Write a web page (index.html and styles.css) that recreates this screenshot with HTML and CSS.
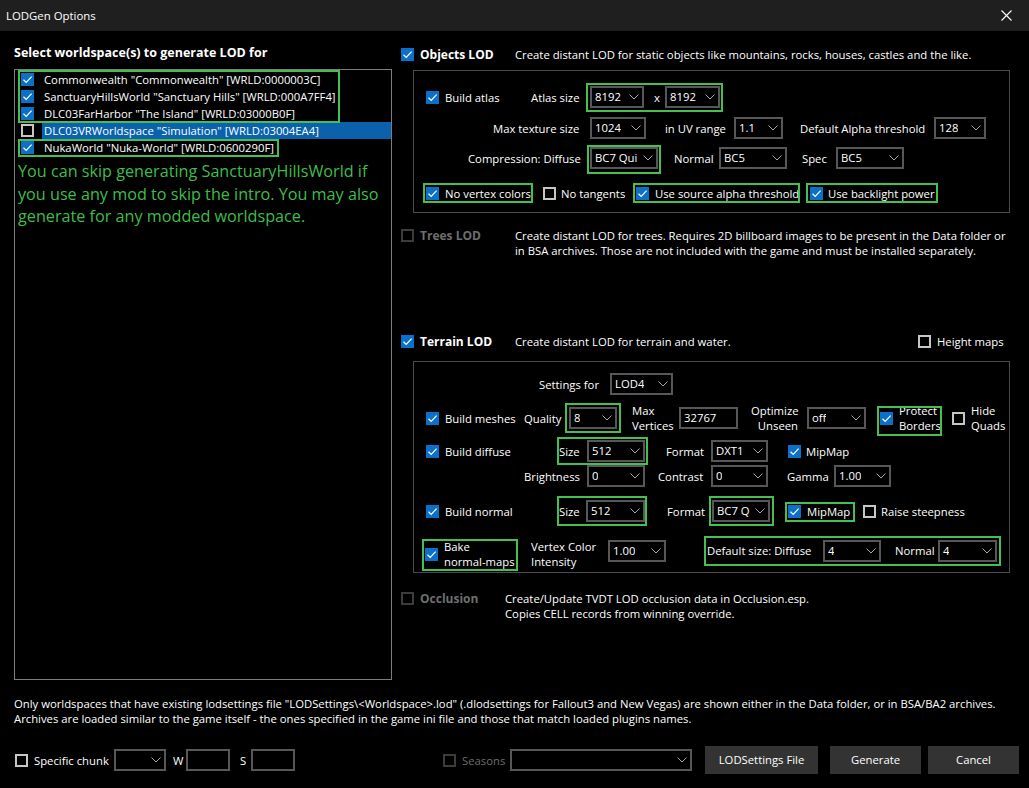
FILE: index.html
```html
<!DOCTYPE html>
<html>
<head>
<meta charset="utf-8">
<title>LODGen Options</title>
<link rel="stylesheet" href="styles.css">
</head>
<body>
<div class="titlebar">
  <span class="title">LODGen Options</span>
  <svg class="close" width="11" height="11" viewBox="0 0 11 11"><path d="M0.5 0.5L10.5 10.5M10.5 0.5L0.5 10.5" stroke="#fff" stroke-width="1.1"/></svg>
</div>

<div class="main">
  <div class="left">
    <h2 class="heading">Select worldspace(s) to generate LOD for</h2>
    <div class="list">
      <div class="item"><span class="cb on"><svg viewBox="0 0 13 13"><polyline points="2.5,6.8 5.2,9.4 10.6,3.6"/></svg></span><span class="name">Commonwealth "Commonwealth" [WRLD:0000003C]</span></div>
      <div class="item"><span class="cb on"><svg viewBox="0 0 13 13"><polyline points="2.5,6.8 5.2,9.4 10.6,3.6"/></svg></span><span class="name">SanctuaryHillsWorld "Sanctuary Hills" [WRLD:000A7FF4]</span></div>
      <div class="item"><span class="cb on"><svg viewBox="0 0 13 13"><polyline points="2.5,6.8 5.2,9.4 10.6,3.6"/></svg></span><span class="name">DLC03FarHarbor "The Island" [WRLD:03000B0F]</span></div>
      <div class="item sel"><span class="cb off"></span><span class="name">DLC03VRWorldspace "Simulation" [WRLD:03004EA4]</span></div>
      <div class="item"><span class="cb on"><svg viewBox="0 0 13 13"><polyline points="2.5,6.8 5.2,9.4 10.6,3.6"/></svg></span><span class="name">NukaWorld "Nuka-World" [WRLD:0600290F]</span></div>
      <p class="note">You can skip generating SanctuaryHillsWorld if<br>you use any mod to skip the intro. You may also<br>generate for any modded worldspace.</p>
    </div>
  </div>

  <div class="right">
    <div class="hdr hdr-objects">
      <span class="hdr-cbw"><span class="cb on"><svg viewBox="0 0 13 13"><polyline points="2.5,6.8 5.2,9.4 10.6,3.6"/></svg></span></span>
      <span class="hdr-lbl">Objects LOD</span>
      <span class="hdr-desc">Create distant LOD for static objects like mountains, rocks, houses, castles and the like.</span>
    </div>
    <div class="grp grp-obj">
      <div class="row r-o1">
        <span class="cb on"><svg viewBox="0 0 13 13"><polyline points="2.5,6.8 5.2,9.4 10.6,3.6"/></svg></span>
        <span class="lbl">Build atlas</span>
        <span class="lbl">Atlas size</span>
        <span class="combo w54"><span class="val">8192</span><svg class="chev" viewBox="0 0 10 6"><polyline points="0.5,0.5 5,5 9.5,0.5"/></svg></span>
        <span class="lbl">x</span>
        <span class="combo w55"><span class="val">8192</span><svg class="chev" viewBox="0 0 10 6"><polyline points="0.5,0.5 5,5 9.5,0.5"/></svg></span>
      </div>
      <div class="row r-o2">
        <span class="lbl">Max texture size</span>
        <span class="combo w56"><span class="val">1024</span><svg class="chev" viewBox="0 0 10 6"><polyline points="0.5,0.5 5,5 9.5,0.5"/></svg></span>
        <span class="lbl">in UV range</span>
        <span class="combo w49"><span class="val">1.1</span><svg class="chev" viewBox="0 0 10 6"><polyline points="0.5,0.5 5,5 9.5,0.5"/></svg></span>
        <span class="lbl">Default Alpha threshold</span>
        <span class="combo w52"><span class="val">128</span><svg class="chev" viewBox="0 0 10 6"><polyline points="0.5,0.5 5,5 9.5,0.5"/></svg></span>
      </div>
      <div class="row r-o3">
        <span class="lbl">Compression: Diffuse</span>
        <span class="combo w68"><span class="val">BC7 Qui</span><svg class="chev" viewBox="0 0 10 6"><polyline points="0.5,0.5 5,5 9.5,0.5"/></svg></span>
        <span class="lbl">Normal</span>
        <span class="combo w68"><span class="val">BC5</span><svg class="chev" viewBox="0 0 10 6"><polyline points="0.5,0.5 5,5 9.5,0.5"/></svg></span>
        <span class="lbl">Spec</span>
        <span class="combo w68"><span class="val">BC5</span><svg class="chev" viewBox="0 0 10 6"><polyline points="0.5,0.5 5,5 9.5,0.5"/></svg></span>
      </div>
      <div class="row r-o4">
        <span class="cb on"><svg viewBox="0 0 13 13"><polyline points="2.5,6.8 5.2,9.4 10.6,3.6"/></svg></span>
        <span class="lbl">No vertex colors</span>
        <span class="cb off"></span>
        <span class="lbl">No tangents</span>
        <span class="cb on"><svg viewBox="0 0 13 13"><polyline points="2.5,6.8 5.2,9.4 10.6,3.6"/></svg></span>
        <span class="lbl">Use source alpha threshold</span>
        <span class="cb on"><svg viewBox="0 0 13 13"><polyline points="2.5,6.8 5.2,9.4 10.6,3.6"/></svg></span>
        <span class="lbl">Use backlight power</span>
      </div>
    </div>

    <div class="hdr hdr-trees">
      <span class="hdr-cbw"><span class="cb dis"></span></span>
      <span class="hdr-lbl dim">Trees LOD</span>
      <span class="hdr-desc">Create distant LOD for trees. Requires 2D billboard images to be present in the Data folder or<br>in BSA archives. Those are not included with the game and must be installed separately.</span>
    </div>

    <div class="hdr hdr-terrain">
      <span class="hdr-cbw"><span class="cb on"><svg viewBox="0 0 13 13"><polyline points="2.5,6.8 5.2,9.4 10.6,3.6"/></svg></span></span>
      <span class="hdr-lbl">Terrain LOD</span>
      <span class="hdr-desc desc-terrain">Create distant LOD for terrain and water.</span>
      <span class="hdr-cbw"><span class="cb off"></span></span>
      <span class="lbl">Height maps</span>
    </div>
    <div class="grp grp-ter">
      <div class="row r-t1">
        <span class="lbl">Settings for</span>
        <span class="combo w63"><span class="val">LOD4</span><svg class="chev" viewBox="0 0 10 6"><polyline points="0.5,0.5 5,5 9.5,0.5"/></svg></span>
      </div>
      <div class="row tall r-t2">
        <span class="cb on"><svg viewBox="0 0 13 13"><polyline points="2.5,6.8 5.2,9.4 10.6,3.6"/></svg></span>
        <span class="lbl">Build meshes</span>
        <span class="lbl">Quality</span>
        <span class="combo w48"><span class="val">8</span><svg class="chev" viewBox="0 0 10 6"><polyline points="0.5,0.5 5,5 9.5,0.5"/></svg></span>
        <span class="lbl two">Max<br>Vertices</span>
        <span class="field w59">32767</span>
        <span class="lbl two ralign">Optimize<br>Unseen</span>
        <span class="combo w59"><span class="val">off</span><svg class="chev" viewBox="0 0 10 6"><polyline points="0.5,0.5 5,5 9.5,0.5"/></svg></span>
        <span class="cb on"><svg viewBox="0 0 13 13"><polyline points="2.5,6.8 5.2,9.4 10.6,3.6"/></svg></span>
        <span class="lbl two">Protect<br>Borders</span>
        <span class="cb off"></span>
        <span class="lbl two">Hide<br>Quads</span>
      </div>
      <div class="row r-t3">
        <span class="cb on"><svg viewBox="0 0 13 13"><polyline points="2.5,6.8 5.2,9.4 10.6,3.6"/></svg></span>
        <span class="lbl">Build diffuse</span>
        <span class="lbl">Size</span>
        <span class="combo w58"><span class="val">512</span><svg class="chev" viewBox="0 0 10 6"><polyline points="0.5,0.5 5,5 9.5,0.5"/></svg></span>
        <span class="lbl">Format</span>
        <span class="combo w57"><span class="val">DXT1</span><svg class="chev" viewBox="0 0 10 6"><polyline points="0.5,0.5 5,5 9.5,0.5"/></svg></span>
        <span class="cb on"><svg viewBox="0 0 13 13"><polyline points="2.5,6.8 5.2,9.4 10.6,3.6"/></svg></span>
        <span class="lbl">MipMap</span>
      </div>
      <div class="row r-t4">
        <span class="lbl">Brightness</span>
        <span class="combo w58"><span class="val">0</span><svg class="chev" viewBox="0 0 10 6"><polyline points="0.5,0.5 5,5 9.5,0.5"/></svg></span>
        <span class="lbl">Contrast</span>
        <span class="combo w57"><span class="val">0</span><svg class="chev" viewBox="0 0 10 6"><polyline points="0.5,0.5 5,5 9.5,0.5"/></svg></span>
        <span class="lbl">Gamma</span>
        <span class="combo w57"><span class="val">1.00</span><svg class="chev" viewBox="0 0 10 6"><polyline points="0.5,0.5 5,5 9.5,0.5"/></svg></span>
      </div>
      <div class="row r-t5">
        <span class="cb on"><svg viewBox="0 0 13 13"><polyline points="2.5,6.8 5.2,9.4 10.6,3.6"/></svg></span>
        <span class="lbl">Build normal</span>
        <span class="lbl">Size</span>
        <span class="combo w59"><span class="val">512</span><svg class="chev" viewBox="0 0 10 6"><polyline points="0.5,0.5 5,5 9.5,0.5"/></svg></span>
        <span class="lbl">Format</span>
        <span class="combo w58"><span class="val clip">BC7 Q</span><svg class="chev" viewBox="0 0 10 6"><polyline points="0.5,0.5 5,5 9.5,0.5"/></svg></span>
        <span class="cb on"><svg viewBox="0 0 13 13"><polyline points="2.5,6.8 5.2,9.4 10.6,3.6"/></svg></span>
        <span class="lbl">MipMap</span>
        <span class="cb off"></span>
        <span class="lbl">Raise steepness</span>
      </div>
      <div class="row tall r-t6">
        <span class="cb on"><svg viewBox="0 0 13 13"><polyline points="2.5,6.8 5.2,9.4 10.6,3.6"/></svg></span>
        <span class="lbl two">Bake<br>normal-maps</span>
        <span class="lbl two">Vertex Color<br>Intensity</span>
        <span class="combo w58 up"><span class="val">1.00</span><svg class="chev" viewBox="0 0 10 6"><polyline points="0.5,0.5 5,5 9.5,0.5"/></svg></span>
        <span class="lbl up">Default size: Diffuse</span>
        <span class="combo w58 up"><span class="val">4</span><svg class="chev" viewBox="0 0 10 6"><polyline points="0.5,0.5 5,5 9.5,0.5"/></svg></span>
        <span class="lbl up">Normal</span>
        <span class="combo w59 up"><span class="val">4</span><svg class="chev" viewBox="0 0 10 6"><polyline points="0.5,0.5 5,5 9.5,0.5"/></svg></span>
      </div>
    </div>

    <div class="hdr hdr-occl">
      <span class="hdr-cbw"><span class="cb dis"></span></span>
      <span class="hdr-lbl occl-lbl dim">Occlusion</span>
      <span class="hdr-desc">Create/Update TVDT LOD occlusion data in Occlusion.esp.<br>Copies CELL records from winning override.</span>
    </div>
  </div>
</div>

<div class="notes">Only worldspaces that have existing lodsettings file "LODSettings\&lt;Worldspace&gt;.lod" (.dlodsettings for Fallout3 and New Vegas) are shown either in the Data folder, or in BSA/BA2 archives.<br>Archives are loaded similar to the game itself - the ones specified in the game ini file and those that match loaded plugins names.</div>

<div class="bottom">
  <span class="cb off"></span>
  <span class="lbl">Specific chunk</span>
  <span class="combo w52"><span class="val"></span><svg class="chev" viewBox="0 0 10 6"><polyline points="0.5,0.5 5,5 9.5,0.5"/></svg></span>
  <span class="lbl">W</span>
  <span class="field w44"></span>
  <span class="lbl">S</span>
  <span class="field w44"></span>
  <span class="cb dis"></span>
  <span class="lbl dim">Seasons</span>
  <span class="combo w182"><span class="val"></span><svg class="chev" viewBox="0 0 10 6"><polyline points="0.5,0.5 5,5 9.5,0.5"/></svg></span>
  <span class="btn w113">LODSettings File</span>
  <span class="btn w91">Generate</span>
  <span class="btn w91">Cancel</span>
</div>

<div class="annot a1"></div>
<div class="annot a2"></div>
<div class="annot a3"></div>
<div class="annot a4"></div>
<div class="annot a5"></div>
<div class="annot a6"></div>
<div class="annot a7"></div>
<div class="annot a8"></div>
<div class="annot a9"></div>
<div class="annot a10"></div>
<div class="annot a11"></div>
<div class="annot a12"></div>
<div class="annot a13"></div>
<div class="annot a14"></div>
<div class="annot a15"></div>
</body>
</html>
```

FILE: styles.css
```css
* { box-sizing: border-box; }
html, body { margin: 0; padding: 0; }
body {
  position: relative;
  width: 1029px;
  height: 788px;
  overflow: hidden;
  background: #000;
  color: #fff;
  font-family: "Open Sans", "Noto Sans", sans-serif;
  font-size: 11.3px;
}

/* title bar */
.titlebar {
  height: 31px;
  background: #1f1f1f;
  display: flex;
  align-items: center;
  justify-content: space-between;
  padding: 0 17px 0 6px;
  font-size: 11.4px;
}
.close { width: 11px; height: 11px; display: block; }

/* generic controls */
.cb {
  display: block;
  width: 13px;
  height: 13px;
  flex: none;
}
.cb svg { display: block; width: 13px; height: 13px; }
.cb svg polyline { fill: none; stroke: #fff; stroke-width: 1.2; }
.cb.on { background: #0b70c9; }
.cb.off { border: 2px solid #c6c6c6; }
.cb.dis { border: 2px solid #3c3c3c; }

.lbl { white-space: nowrap; line-height: 15px; }
.lbl.two { white-space: nowrap; }
.lbl.ralign { text-align: right; padding-right: 9px; }
.dim { color: #6e6e6e; }

.combo {
  display: flex;
  align-items: center;
  justify-content: space-between;
  height: 22px;
  border: 2px solid #575757;
  padding: 0 3px 2px 3px;
  white-space: nowrap;
  overflow: hidden;
}
.combo .val { overflow: hidden; }
.chev {
  display: block;
  width: 10px;
  height: 6px;
  flex: none;
  margin-top: 2px;
}
.chev polyline { fill: none; stroke: #a9a9a9; stroke-width: 1; }

.field {
  display: flex;
  align-items: center;
  height: 22px;
  border: 2px solid #575757;
  padding: 0 3px 2px 3px;
}

.w44 { width: 44px; }
.w48 { width: 48px; }
.w49 { width: 49px; }
.w52 { width: 52px; }
.w54 { width: 54px; }
.w55 { width: 55px; }
.w56 { width: 56px; }
.w57 { width: 57px; }
.w58 { width: 58px; }
.w59 { width: 59px; }
.w63 { width: 63px; }
.w68 { width: 68px; }
.w91 { width: 91px; }
.w113 { width: 113px; }
.w182 { width: 182px; }

/* main area */
.main {
  display: flex;
  height: 649px;
  padding-left: 14px;
}
.left {
  width: 378px;
  display: flex;
  flex-direction: column;
}
.heading {
  margin: 14px 0 8px;
  font-size: 12.5px;
  font-weight: 700;
  line-height: 16px;
  height: 16px;
}
.list {
  flex: 1;
  border: 1px solid #7d7d7d;
  padding-top: 1px;
}
.item {
  display: flex;
  align-items: center;
  height: 17px;
  padding-left: 6px;
}
.item .name {
  margin-left: 8px;
  padding-left: 2px;
  height: 17px;
  line-height: 17px;
  flex: 1;
  white-space: nowrap;
}
.item.sel .name { background: #0a62ad; }
.note {
  margin: 4px 0 0;
  padding-left: 3px;
  color: #3fbd4a;
  font-size: 16.2px;
  line-height: 22.5px;
  white-space: nowrap;
}

.right {
  margin-left: 9px;
  width: 609px;
}
.hdr {
  display: flex;
  align-items: flex-start;
  line-height: 15px;
}
.hdr-cbw { width: 19px; padding-top: 1px; flex: none; }
.hdr-lbl { width: 95px; flex: none; font-weight: 700; font-size: 12px; }
.occl-lbl { width: 85px; }
.hdr-desc { white-space: nowrap; }
.desc-terrain { width: 403px; }
.hdr-objects { margin-top: 16px; }
.hdr-trees { margin-top: 15px; }
.hdr-terrain { margin-top: 76px; }
.hdr-occl { margin-top: 18px; }

.grp {
  margin-left: 12px;
  width: 597px;
  border: 1px solid #4a4a4a;
}
.grp-obj { margin-top: 8px; height: 143px; padding-top: 15px; }
.grp-ter { margin-top: 12px; height: 212px; padding-top: 11px; }

.row {
  display: grid;
  align-items: center;
  height: 22px;
}
.row.tall { height: 30px; }

.r-o1 { padding-left: 12px; grid-template-columns: 19px 86px 59px 64px 11px 55px; }
.r-o2 { margin-top: 9px; padding-left: 79px; grid-template-columns: 97px 75px 69px 66px 134px 52px; }
.r-o3 { margin-top: 8px; padding-left: 54px; grid-template-columns: 122px 84px 45px 83px 34px 68px; }
.r-o4 { margin-top: 13px; padding-left: 12px; grid-template-columns: 19px 98px 18px 75px 19px 155px 18px auto; }

.r-t1 { padding-left: 125px; grid-template-columns: 71px 63px; }
.r-t2 { margin-top: 8px; padding-left: 12px; grid-template-columns: 19px 79px 45px 63px 47px 72px 56px 73px 19px 53px 19px auto; }
.r-t3 { margin-top: 7px; padding-left: 12px; grid-template-columns: 19px 114px 28px 79px 45px 77px 18px auto; }
.r-t4 { margin-top: 3px; padding-left: 110px; grid-template-columns: 63px 71px 53px 76px 47px 57px; }
.r-t5 { margin-top: 13px; padding-left: 12px; grid-template-columns: 19px 114px 27px 81px 45px 76px 19px 56px 18px auto; }
.r-t6 { margin-top: 17px; padding-left: 11px; grid-template-columns: 19px 87px 77px 99px 116px 72px 43px 59px; }
.r-t6 .up { align-self: start; margin-top: 1px; }
.r-t6 .lbl.up { margin-top: 4px; }

/* bottom */
.notes {
  margin-top: 16px;
  padding-left: 14px;
  line-height: 15px;
  white-space: nowrap;
}
.bottom {
  margin-top: 20px;
  height: 28px;
  padding-left: 15px;
  display: grid;
  align-items: center;
  grid-template-columns: 19px 80px 59px 13px 54px 11px 192px 19px 48px 195px 125px 98px 91px;
}
.btn {
  height: 28px;
  background: #333;
  display: flex;
  align-items: center;
  justify-content: center;
  padding-bottom: 1px;
}

/* green annotation frames drawn over the dialog */
.annot {
  position: absolute;
  border: 2px solid #45bf52;
  pointer-events: none;
}
.a1 { left: 18px; top: 70px; width: 322px; height: 53px; }
.a2 { left: 18px; top: 139px; width: 261px; height: 18px; }
.a3 { left: 586px; top: 83px; width: 137px; height: 29px; }
.a4 { left: 587px; top: 145px; width: 74px; height: 29px; }
.a5 { left: 423px; top: 183px; width: 110px; height: 20px; }
.a6 { left: 633px; top: 183px; width: 167px; height: 20px; }
.a7 { left: 806px; top: 183px; width: 132px; height: 20px; }
.a8 { left: 565px; top: 403px; width: 56px; height: 30px; }
.a9 { left: 557px; top: 437px; width: 91px; height: 28px; }
.a10 { left: 557px; top: 496px; width: 90px; height: 30px; }
.a11 { left: 422px; top: 539px; width: 96px; height: 32px; }
.a12 { left: 877px; top: 406px; width: 65px; height: 30px; }
.a13 { left: 709px; top: 496px; width: 65px; height: 30px; }
.a14 { left: 785px; top: 502px; width: 70px; height: 20px; }
.a15 { left: 704px; top: 536px; width: 297px; height: 30px; }
```
